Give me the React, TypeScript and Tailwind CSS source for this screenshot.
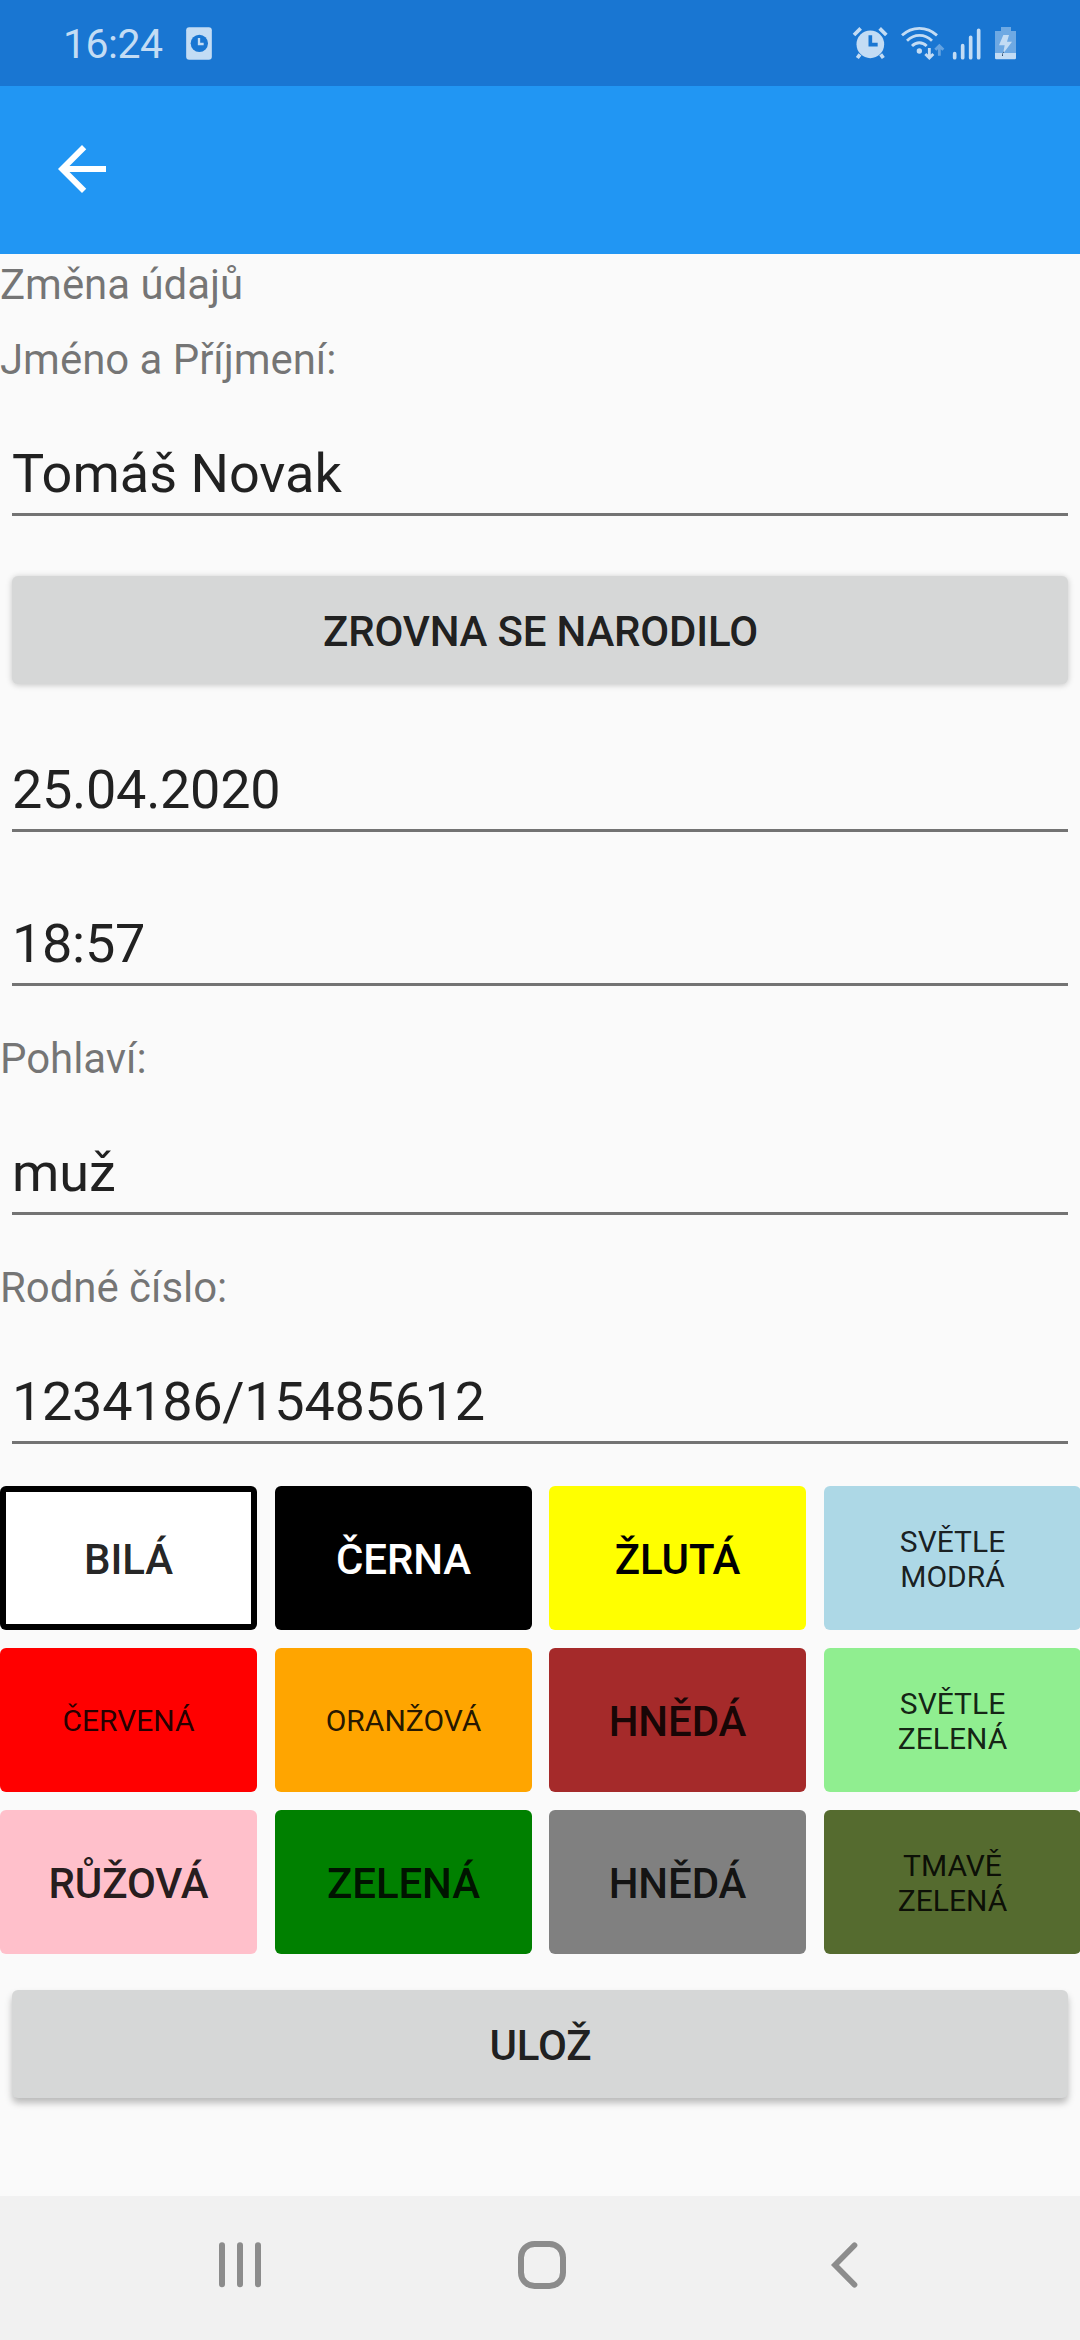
import type { ReactNode } from "react";

function StatusBar() {
  return (
    <header className="flex h-[86px] items-start bg-[#1976d2] text-[#c3dcf4]">
      <span className="ml-[63px] mt-[20px] w-[123px] text-[41px] leading-[48px] tracking-[-0.5px]">16:24</span>
      <svg className="mt-[27px] h-[33px] w-[26px]" viewBox="558 81 78 99">
        <rect x="558.5" y="81.5" width="77" height="97.5" rx="9" fill="currentColor" />
        <circle cx="598" cy="130" r="26" fill="#1976d2" />
        <path d="M597 114v18h14" fill="none" stroke="currentColor" strokeWidth="7" />
      </svg>
      <div className="ml-[640px] mt-[26px] flex h-[35px]">
        <svg className="h-[35px] w-[38px]" viewBox="96 78 114 105">
          <circle cx="151" cy="133" r="41.5" fill="currentColor" />
          <path
            d="M102 105l20-20M199 105l-20-20M120 163l-8 11M182 163l8 11"
            fill="none"
            stroke="currentColor"
            strokeWidth="11"
          />
          <path d="M151 106v28h22" fill="none" stroke="#1976d2" strokeWidth="11" />
        </svg>
        <svg className="ml-[9px] h-[35px] w-[46px]" viewBox="237 78 138 105">
          <g fill="none" stroke="currentColor" strokeWidth="8.5">
            <path d="M246 106C276 78 320 78 351 106" />
            <path d="M261 122C283 101 314 101 336 122" />
            <path d="M276 138C289 125 307 125 320 138" />
            <path d="M328 144v29M316 162l12 12 12-12" />
            <path d="M358 167v-29M346 149l12-12 12 12" opacity="0.45" />
          </g>
          <circle cx="298" cy="153" r="8" fill="currentColor" />
        </svg>
        <svg className="ml-[6px] h-[35px] w-[32px]" viewBox="393 78 96 105">
          <path
            d="M404 161v12M428 137v36M452 112v61M476 91v82"
            stroke="currentColor"
            strokeWidth="11"
            strokeLinecap="round"
          />
        </svg>
        <svg className="ml-[10px] h-[35px] w-[25px]" viewBox="519 78 75 105">
          <path d="M543 81h30v12h15v66h-63V93h18z" fill="currentColor" opacity="0.5" />
          <path d="M525 159h63v15q0 4-4 4h-55q-4 0-4-4z" fill="currentColor" />
          <path d="M550 105h17l-6 20h15l-27 36 5-25h-17z" fill="currentColor" />
          <path d="M547 159h5v-4h-2v4h-4v9h3z" fill="#173a5c" />
        </svg>
      </div>
    </header>
  );
}

function AppBar() {
  return (
    <div className="flex h-[168px] bg-[#2196f3] pl-[46px] pt-[47px]">
      <button className="size-[72px] text-white" aria-label="Zpět">
        <svg viewBox="0 0 24 24" fill="currentColor">
          <path d="M20 11H7.83l5.59-5.59L12 4l-8 8 8 8 1.41-1.41L7.83 13H20v-2z" />
        </svg>
      </button>
    </div>
  );
}

function Label({ children }: { children: ReactNode }) {
  return (
    <div className="h-[57px] text-[42px] leading-[61px] tracking-[-0.05px] text-black/54">{children}</div>
  );
}

function Entry({ children, numeric }: { children: ReactNode; numeric?: boolean }) {
  return (
    <div className="h-[136px] px-[12px]">
      <div
        className={`h-[112px] border-b-[3px] border-[#737373] text-[54px] leading-[139px] text-black/87 ${
          numeric ? "tracking-[-0.3px]" : ""
        }`}
      >
        {children}
      </div>
    </div>
  );
}

function RaisedButton({ children, shadow }: { children: ReactNode; shadow: string }) {
  return (
    <div className="px-[12px] py-[18px]">
      <button
        className={`block h-[108px] w-full rounded-[6px] bg-[#d6d7d7] pl-px text-center text-[42px] leading-[111px] font-medium tracking-[-0.2px] text-black/87 ${shadow}`}
      >
        {children}
      </button>
    </div>
  );
}

type Swatch = { lines: string[]; style: string; small?: boolean };

const swatches: Swatch[] = [
  { lines: ["BILÁ"], style: "bg-white text-black/87 shadow-[inset_0_0_0_6px_black]" },
  { lines: ["ČERNA"], style: "bg-black text-white" },
  { lines: ["ŽLUTÁ"], style: "bg-[#ffff00] text-black" },
  { lines: ["SVĚTLE", "MODRÁ"], style: "bg-[#add8e6] text-black/87", small: true },
  { lines: ["ČERVENÁ"], style: "bg-[#ff0000] text-black/87", small: true },
  { lines: ["ORANŽOVÁ"], style: "bg-[#ffa500] text-black/87", small: true },
  { lines: ["HNĚDÁ"], style: "bg-[#a52a2a] text-black/87" },
  { lines: ["SVĚTLE", "ZELENÁ"], style: "bg-[#90ee90] text-black/87", small: true },
  { lines: ["RŮŽOVÁ"], style: "bg-[#ffc0cb] text-black/87" },
  { lines: ["ZELENÁ"], style: "bg-[#008000] text-black/87" },
  { lines: ["HNĚDÁ"], style: "bg-[#808080] text-black/87" },
  { lines: ["TMAVĚ", "ZELENÁ"], style: "bg-[#556b2f] text-black/87", small: true },
];

function ColorGrid() {
  return (
    <div className="grid grid-cols-[275px_274px_275px_256px] gap-y-[18px]">
      {swatches.map(({ lines, style, small }, i) => (
        <button
          key={i}
          className={`flex h-[144px] w-[257px] flex-col items-center justify-center rounded-[6px] ${
            small
              ? "pt-px text-[30px] leading-[35px]"
              : "pt-[3px] text-[42px] leading-[49px] font-medium tracking-[-0.1px]"
          } ${style}`}
        >
          {lines.map((line) => (
            <span key={line} className="block">
              {line}
            </span>
          ))}
        </button>
      ))}
    </div>
  );
}

function NavBar() {
  return (
    <nav className="flex h-[144px] items-start bg-[#f1f1f1] pt-[45px] text-[#8c8c8c]">
      <svg className="ml-[216px] size-[48px]" viewBox="0 0 48 48">
        <path
          d="M6 4.3v39M24 4.3v39M42 4.3v39"
          stroke="currentColor"
          strokeWidth="6"
          strokeLinecap="round"
        />
      </svg>
      <svg className="ml-[254px] size-[48px]" viewBox="0 0 48 48">
        <rect x="3" y="3" width="42" height="42" rx="13.5" fill="none" stroke="currentColor" strokeWidth="6" />
      </svg>
      <svg className="ml-[254px] size-[48px]" viewBox="0 0 48 48">
        <path
          d="M34.5 4.3L15 24l19.5 19.7"
          fill="none"
          stroke="currentColor"
          strokeWidth="5.7"
          strokeLinecap="round"
        />
      </svg>
    </nav>
  );
}

export default function App() {
  return (
    <div className="flex h-[2340px] w-[1080px] flex-col overflow-hidden bg-[#fafafa] font-['Roboto',sans-serif]">
      <StatusBar />
      <AppBar />
      <main className="flex flex-1 flex-col gap-[18px]">
        <Label>Změna údajů</Label>
        <Label>Jméno a Příjmení:</Label>
        <Entry>Tomáš Novak</Entry>
        <RaisedButton shadow="shadow-[0_1px_6px_rgba(0,0,0,0.22)]">ZROVNA SE NARODILO</RaisedButton>
        <Entry numeric>25.04.2020</Entry>
        <Entry numeric>18:57</Entry>
        <Label>Pohlaví:</Label>
        <Entry>muž</Entry>
        <Label>Rodné číslo:</Label>
        <Entry numeric>1234186/15485612</Entry>
        <ColorGrid />
        <RaisedButton shadow="shadow-[0_5px_7px_rgba(0,0,0,0.26)]">ULOŽ</RaisedButton>
      </main>
      <NavBar />
    </div>
  );
}
